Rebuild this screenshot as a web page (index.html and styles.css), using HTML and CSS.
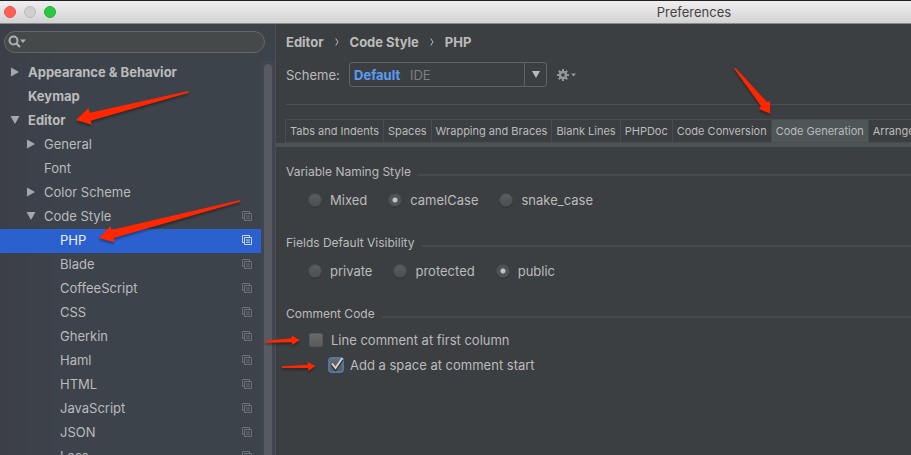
FILE: index.html
```html
<!DOCTYPE html>
<html lang="en">
<head>
<meta charset="utf-8">
<title>Preferences</title>
<link rel="stylesheet" href="styles.css">
</head>
<body>
<svg class="defs" aria-hidden="true">
  <symbol id="right" viewBox="0 0 10 10"><path d="M1 0.500L9 5L1 9.500Z" fill="currentColor"/></symbol>
  <symbol id="down" viewBox="0 0 10 10"><path d="M0.500 1H9.500L5 9Z" fill="currentColor"/></symbol>
  <symbol id="copy" viewBox="0 0 10 10"><path d="M2.500 7.500H.5V.5H7.500V2.500M2.500 2.500H9.500V9.500H2.500ZM4 5H8M4 7.200H8" fill="none" stroke="currentColor"/></symbol>
</svg>
<div class="window">
  <header class="titlebar">
    <div class="lights"><span class="light close"></span><span class="light minimize"></span><span class="light zoom"></span></div>
    <h1>Preferences</h1>
  </header>
  <div class="body">
    <aside class="sidebar">
      <div class="search">
        <svg viewBox="0 0 18 14" aria-hidden="true"><circle cx="5.500" cy="5.500" r="4" fill="none" stroke="currentColor" stroke-width="2"/><path d="M8.500 8.500L12 12" stroke="currentColor" stroke-width="2.200"/><path d="M12 4.500H18L15 8Z" fill="currentColor"/></svg>
        <input type="search" aria-label="Search settings">
      </div>
      <div class="treewrap">
        <ul class="tree">
          <li><button class="row top"><svg class="tri"><use href="#right"/></svg><span>Appearance &amp; Behavior</span></button></li>
          <li><button class="row top"><svg class="tri"></svg><span>Keymap</span></button></li>
          <li><button class="row top"><svg class="tri"><use href="#down"/></svg><span>Editor</span></button></li>
          <li><button class="row mid"><svg class="tri"><use href="#right"/></svg><span>General</span></button></li>
          <li><button class="row mid"><svg class="tri"></svg><span>Font</span></button></li>
          <li><button class="row mid"><svg class="tri"><use href="#right"/></svg><span>Color Scheme</span></button></li>
          <li><button class="row mid"><svg class="tri"><use href="#down"/></svg><span>Code Style</span><svg class="copy"><use href="#copy"/></svg></button></li>
          <li><button class="row leaf selected"><span>PHP</span><svg class="copy"><use href="#copy"/></svg></button></li>
          <li><button class="row leaf"><span>Blade</span><svg class="copy"><use href="#copy"/></svg></button></li>
          <li><button class="row leaf"><span>CoffeeScript</span><svg class="copy"><use href="#copy"/></svg></button></li>
          <li><button class="row leaf"><span>CSS</span><svg class="copy"><use href="#copy"/></svg></button></li>
          <li><button class="row leaf"><span>Gherkin</span><svg class="copy"><use href="#copy"/></svg></button></li>
          <li><button class="row leaf"><span>Haml</span><svg class="copy"><use href="#copy"/></svg></button></li>
          <li><button class="row leaf"><span>HTML</span><svg class="copy"><use href="#copy"/></svg></button></li>
          <li><button class="row leaf"><span>JavaScript</span><svg class="copy"><use href="#copy"/></svg></button></li>
          <li><button class="row leaf"><span>JSON</span><svg class="copy"><use href="#copy"/></svg></button></li>
          <li><button class="row leaf"><span>Less</span><svg class="copy"><use href="#copy"/></svg></button></li>
        </ul>
        <div class="scrollbar"><div class="thumb"></div></div>
      </div>
    </aside>
    <main class="content">
      <nav class="crumbs" aria-label="Breadcrumb">
        <span>Editor</span><svg viewBox="0 0 4 8" aria-hidden="true"><path d="M.7.5L3 4L.7 7.500"/></svg><span>Code Style</span><svg viewBox="0 0 4 8" aria-hidden="true"><path d="M.7.5L3 4L.7 7.500"/></svg><span>PHP</span>
      </nav>
      <div class="scheme">
        <label for="scheme">Scheme:</label>
        <div class="combo">
          <select id="scheme"><option>Default</option></select>
          <span class="scope">IDE</span>
          <span class="drop"><svg viewBox="0 0 8 7" aria-hidden="true"><path d="M0 0H8L4 7Z" fill="currentColor"/></svg></span>
        </div>
        <button class="gear" aria-label="Scheme actions">
          <svg viewBox="0 0 19 12" aria-hidden="true"><circle cx="6" cy="6" r="3" fill="none" stroke="currentColor" stroke-width="2.400"/><path d="M6 0V2.500M6 9.500V12M0 6H2.500M9.500 6H12M1.800 1.800L3.500 3.500M8.500 8.500L10.200 10.200M10.200 1.800L8.500 3.500M3.500 8.500L1.800 10.200" stroke="currentColor" stroke-width="2"/><path d="M14 4.500H19L16.500 7.500Z" fill="currentColor"/></svg>
        </button>
      </div>
      <div class="tabs" role="tablist">
        <button role="tab">Tabs and Indents</button><button role="tab">Spaces</button><button role="tab">Wrapping and Braces</button><button role="tab">Blank Lines</button><button role="tab">PHPDoc</button><button role="tab">Code Conversion</button><button role="tab" aria-selected="true">Code Generation</button><button role="tab">Arrangement</button>
      </div>
      <form class="form">
        <section role="radiogroup" aria-labelledby="naming">
          <h2 id="naming">Variable Naming Style</h2>
          <div class="options">
            <label><input type="radio" name="naming">Mixed</label>
            <label><input type="radio" name="naming" checked>camelCase</label>
            <label><input type="radio" name="naming">snake_case</label>
          </div>
        </section>
        <section role="radiogroup" aria-labelledby="visibility">
          <h2 id="visibility">Fields Default Visibility</h2>
          <div class="options">
            <label><input type="radio" name="visibility">private</label>
            <label><input type="radio" name="visibility">protected</label>
            <label><input type="radio" name="visibility" checked>public</label>
          </div>
        </section>
        <section>
          <h2>Comment Code</h2>
          <div class="checks">
            <label><input type="checkbox">Line comment at first column</label>
            <label class="nested"><span class="tick"><input type="checkbox" checked><svg viewBox="0 0 16 16" aria-hidden="true"><path d="M4 8L7.500 12.500L14.500 2.500" fill="none" stroke="#26282a" stroke-width="2.500"/><path d="M4 6.500L7.500 11L14.500 1" fill="none" stroke="#d0d0d0" stroke-width="2"/></svg></span>Add a space at comment start</label>
          </div>
        </section>
      </form>
    </main>
  </div>
  <svg class="arrows" viewBox="0 0 911 455" width="911" height="455" aria-hidden="true">
    <path d="M76 120L88.300 108.300L90 112.700L188.300 91L188.700 92.700L90.700 120.700L91.700 124.700Z"/>
    <path d="M98.700 238L110.700 226L111.300 230L240 200L240.300 201.700L113.700 238L114.300 242.300Z"/>
    <path d="M770.300 113.700L759 109L761 106L734 68.500L735.700 68L767 102L770 101.300Z"/>
    <path d="M265.700 340.700L291.700 338.300V335.700L299.700 340L292.300 345L292 342.300L265.700 342.700Z"/>
    <path d="M282 366.300L308 364.700L307.700 362L315.300 366L308.300 371V368L282 368Z"/>
  </svg>
</div>
</body>
</html>
```
FILE: styles.css
```css
* { box-sizing: border-box; }
body {
  margin: 0;
  background: #3c3f41;
  color: #bbb;
  font: 13px/16px Inter, "Liberation Sans", sans-serif;
}
button, input, select { font: inherit; color: inherit; }
button { border: 0; background: none; padding: 0; }
.defs { display: none; }

.window {
  position: relative;
  display: flex;
  flex-direction: column;
  height: 100vh;
  overflow: hidden;
}
.titlebar {
  flex: none;
  display: flex;
  align-items: center;
  height: 24px;
  border-top: 1px solid #241f22;
  border-bottom: 1px solid #8b8b8b;
  background: linear-gradient(#efefef, #d3d3d3);
}
.lights { display: flex; flex: none; gap: 8px; width: 477px; padding-left: 4px; }
.light { width: 12px; height: 12px; border-radius: 50%; border: 1px solid; }
.close { background: #ff5f57; border-color: #e9524a; }
.minimize { background: #cfcfcf; border-color: #bcbcbc; }
.zoom { background: #28c940; border-color: #22b137; }
h1 { flex: 1; margin: 0; text-align: center; font-size: 13px; font-weight: 400; color: #444; }

.body { display: flex; flex: 1; min-height: 0; }
.sidebar {
  flex: none;
  display: flex;
  flex-direction: column;
  width: 276px;
  padding-top: 7px;
  background: linear-gradient(90deg, #3c3f48, #3d434b 60px);
  border-right: 1px solid #4b4e50;
}
.search {
  flex: none;
  display: flex;
  align-items: center;
  height: 22px;
  margin: 0 10px 8px 4px;
  padding: 0 8px 0 3px;
  border: 1px solid #646764;
  border-radius: 11px;
  background: #45494a;
  color: #afb1b3;
}
.search svg { flex: none; width: 18px; height: 14px; }
.search input { flex: 1; min-width: 0; border: 0; outline: 0; padding: 0; background: none; appearance: none; }
.treewrap { display: flex; flex: 1; min-height: 0; }
.tree { flex: 1; margin: 0; padding: 0; list-style: none; }
.row {
  display: flex;
  align-items: center;
  width: 100%;
  height: 24px;
  padding-right: 9px;
  padding-bottom: 2px;
  text-align: left;
}
.row span { flex: 1; }
.top { padding-left: 10px; font-weight: 700; }
.mid { padding-left: 26px; }
.leaf { padding-left: 60px; }
.tri { width: 10px; height: 10px; margin-right: 8px; color: #a5a7a9; }
.copy { width: 10px; height: 10px; color: #6b7075; }
.selected { background: #2b61ce; color: #eee; }
.selected .copy { color: #ccd5e6; }
.scrollbar { width: 14px; padding: 3px 3px 0; background: #41464e; }
.thumb { width: 8px; height: 100%; border-radius: 4px 4px 0 0; background: #575a61; }

.content { flex: 1; min-width: 0; padding-top: 10px; }
.crumbs { display: flex; align-items: center; gap: 11px; padding-left: 10px; font-weight: 700; }
.crumbs svg { width: 4px; height: 8px; fill: none; stroke: #bbb; }
.scheme {
  display: flex;
  align-items: center;
  height: 55px;
  margin-left: 10px;
  padding-bottom: 5px;
  border-bottom: 1px solid #4d5052;
}
.scheme label { width: 63px; }
.combo { position: relative; width: 198px; height: 25px; }
.combo select {
  width: 100%;
  height: 100%;
  padding: 0 4px;
  appearance: none;
  border: 1px solid #616365;
  border-radius: 3px;
  background: #3c3f41;
  color: #589df6;
  font-weight: 700;
}
.scope { position: absolute; left: 61px; top: 5px; color: #7d7f80; pointer-events: none; }
.drop {
  position: absolute;
  right: 0;
  top: 1px;
  bottom: 1px;
  display: grid;
  place-items: center;
  width: 23px;
  border-left: 1px solid #616365;
  pointer-events: none;
}
.drop svg { width: 8px; height: 7px; }
.gear { margin-left: 10px; color: #949697; }
.gear svg { display: block; width: 19px; height: 12px; }

.tabs {
  display: flex;
  overflow: hidden;
  margin-top: 14px;
  padding-left: 9px;
  border-bottom: 4px solid #4b5354;
}
.tabs button {
  flex: none;
  height: 24px;
  padding: 0 4px;
  border: 1px solid #494c4e;
  border-left-width: 0;
  font-size: 11px;
}
.tabs button:first-child { border-left-width: 1px; }
.tabs [aria-selected] { background: #4e5657; }

.form { display: grid; gap: 27px; padding: 17px 0 0 10px; }
h2 { display: flex; gap: 7px; margin: 0; font-size: 12px; font-weight: 400; }
h2::after { content: ""; flex: 1; height: 2px; margin-top: 10px; background: #47494b; }
.options { display: flex; gap: 21px; padding: 12px 0 0 22px; }
.options label, .checks label { display: flex; align-items: center; gap: 8px; }
input[type="radio"] {
  width: 14px;
  height: 14px;
  margin: 0;
  appearance: none;
  border: 1px solid #45494b;
  border-radius: 50%;
  background: linear-gradient(#585d5f, #4c5052);
  box-shadow: 0 1px 0 #303335;
}
input[type="radio"]:checked { background: radial-gradient(circle, #c4c4c4 2px, #505456 3px); }
.checks { display: grid; gap: 9px; padding: 10px 0 0 23px; }
input[type="checkbox"] {
  width: 14px;
  height: 14px;
  margin: 0;
  appearance: none;
  border: 1px solid #55575a;
  border-radius: 2px;
  background: linear-gradient(#6a6a6a, #5a5a5a);
}
.checks .nested { margin-left: 19px; gap: 6px; }
.tick { position: relative; width: 16px; height: 16px; }
.tick input { display: block; width: 16px; height: 16px; border: 2px solid #4d79a8; border-radius: 4px; }
.tick svg { position: absolute; inset: 0; pointer-events: none; }

.arrows { position: absolute; left: 0; top: 0; fill: #ff2600; pointer-events: none; filter: drop-shadow(0 2px 1px rgb(0 0 0 / 35%)); }
```
